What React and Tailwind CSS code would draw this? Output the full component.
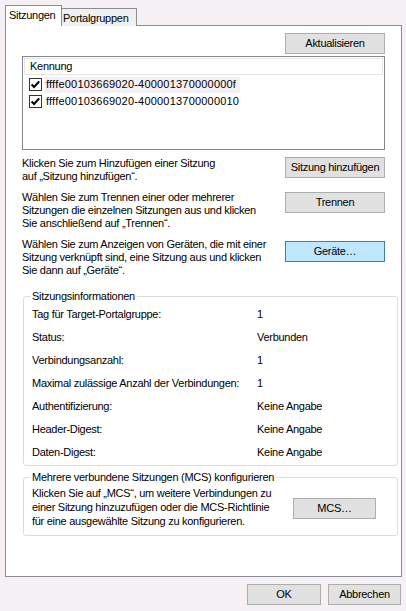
import React from "react";

function Btn({ children, className = "" }) {
  return (
    <div
      className={
        "h-[21px] flex items-center justify-center border bg-[#e1e1e1] border-[#adadad] shrink-0 " +
        className
      }
    >
      {children}
    </div>
  );
}

function Check() {
  return (
    <svg width="13" height="13" viewBox="0 0 13 13" className="shrink-0">
      <rect x="0.5" y="0.5" width="12" height="12" fill="#fff" stroke="#333" />
      <path d="M2.6 6.4 L5.1 9 L10.2 3.4" fill="none" stroke="#000" strokeWidth="2.1" />
    </svg>
  );
}

function InfoRow({ label, value }) {
  return (
    <div className="h-[23px] flex items-center">
      <div className="w-[225px]">{label}</div>
      <div>{value}</div>
    </div>
  );
}

export default function App() {
  return (
    <div className="w-[406px] h-[611px] bg-[#f4f0f4] text-[11px] leading-[13px] tracking-[-0.28px] text-black pt-[5px] pl-[5px] pr-[4px] flex flex-col font-['Liberation_Sans',Arial,sans-serif] overflow-hidden">
      {/* Tabs */}
      <div className="flex items-end h-[20px] relative z-10">
        <div className="h-[21px] -mb-px w-[57px] bg-white border border-b-0 border-[#898c95] pl-[3px] pt-[3px]">
          Sitzungen
        </div>
        <div className="h-[18px] -mb-px w-[75px] bg-[#f0f0f0] border border-l-0 border-b-0 border-[#898c95] pl-[1px] pt-[3px]">
          Portalgruppen
        </div>
      </div>

      {/* Panel */}
      <div className="w-[397px] h-[552px] border border-[#898c95] bg-white flex flex-col">
        <Btn className="self-end mr-[16px] mt-[7px] w-[100px]">Aktualisieren</Btn>

        <div className="mt-[2px] mx-[16px] h-[94px] border border-[#828790] bg-white p-px">
          <div className="h-[17px] border border-[#e5e5e5] flex items-center pl-[5px]">Kennung</div>
          <div className="mt-[1px]">
            <div className="h-[17px] flex items-center pl-[5px]">
              <Check />
              <span className="ml-[3px] h-[16px] w-[195px] flex items-center pl-[1px] bg-[#f4eff4] tracking-[0.2px]">
                ffffe00103669020-400001370000000f
              </span>
            </div>
            <div className="h-[17px] flex items-center pl-[5px]">
              <Check />
              <span className="ml-[3px] pl-[1px] tracking-[0.2px]">ffffe00103669020-4000013700000010</span>
            </div>
          </div>
        </div>

        {/* Action rows */}
        <div className="mt-[7px] ml-[16px] mr-[16px] flex justify-between items-start">
          <div>
            Klicken Sie zum Hinzufügen einer Sitzung
            <br />
            auf „Sitzung hinzufügen“.
          </div>
          <Btn className="w-[100px]">Sitzung hinzufügen</Btn>
        </div>

        <div className="mt-[8px] ml-[16px] mr-[16px] flex justify-between items-start">
          <div>
            Wählen Sie zum Trennen einer oder mehrerer
            <br />
            Sitzungen die einzelnen Sitzungen aus und klicken
            <br />
            Sie anschließend auf „Trennen“.
          </div>
          <Btn className="w-[100px] mt-[1px]">Trennen</Btn>
        </div>

        <div className="mt-[8px] ml-[16px] mr-[16px] flex justify-between items-start">
          <div>
            Wählen Sie zum Anzeigen von Geräten, die mit einer
            <br />
            Sitzung verknüpft sind, eine Sitzung aus und klicken
            <br />
            Sie dann auf „Geräte“.
          </div>
          <div className="w-[100px] h-[21px] mt-[3px] shrink-0 flex items-center justify-center border border-[#3c7fb1] bg-[#bee6fd]">
            Geräte…
          </div>
        </div>

        {/* Sitzungsinformationen */}
        <fieldset className="mt-[13px] ml-[17px] mr-[3px] border border-[#dcdcdc] rounded-[3px] pl-[8px] pb-[1px]">
          <legend className="-ml-[2px] px-[2px]">Sitzungsinformationen</legend>
          <InfoRow label="Tag für Target-Portalgruppe:" value="1" />
          <InfoRow label="Status:" value="Verbunden" />
          <InfoRow label="Verbindungsanzahl:" value="1" />
          <InfoRow label="Maximal zulässige Anzahl der Verbindungen:" value="1" />
          <InfoRow label="Authentifizierung:" value="Keine Angabe" />
          <InfoRow label="Header-Digest:" value="Keine Angabe" />
          <InfoRow label="Daten-Digest:" value="Keine Angabe" />
        </fieldset>

        {/* MCS */}
        <fieldset className="mt-[5px] ml-[17px] mr-[3px] border border-[#dcdcdc] rounded-[3px] pl-[8px] pb-[7px]">
          <legend className="-ml-[2px] px-[2px]">Mehrere verbundene Sitzungen (MCS) konfigurieren</legend>
          <div className="flex items-start mt-[2px]">
            <div className="leading-[14px]">
              Klicken Sie auf „MCS“, um weitere Verbindungen zu
              <br />
              einer Sitzung hinzuzufügen oder die MCS-Richtlinie
              <br />
              für eine ausgewählte Sitzung zu konfigurieren.
            </div>
            <Btn className="ml-auto mr-[21px] mt-[12px] w-[83px]">MCS…</Btn>
          </div>
        </fieldset>
      </div>

      {/* Bottom buttons */}
      <div className="mt-[7px] flex justify-end gap-[7px] mr-[1px]">
        <Btn className="w-[74px]">OK</Btn>
        <Btn className="w-[73px]">Abbrechen</Btn>
      </div>
    </div>
  );
}
